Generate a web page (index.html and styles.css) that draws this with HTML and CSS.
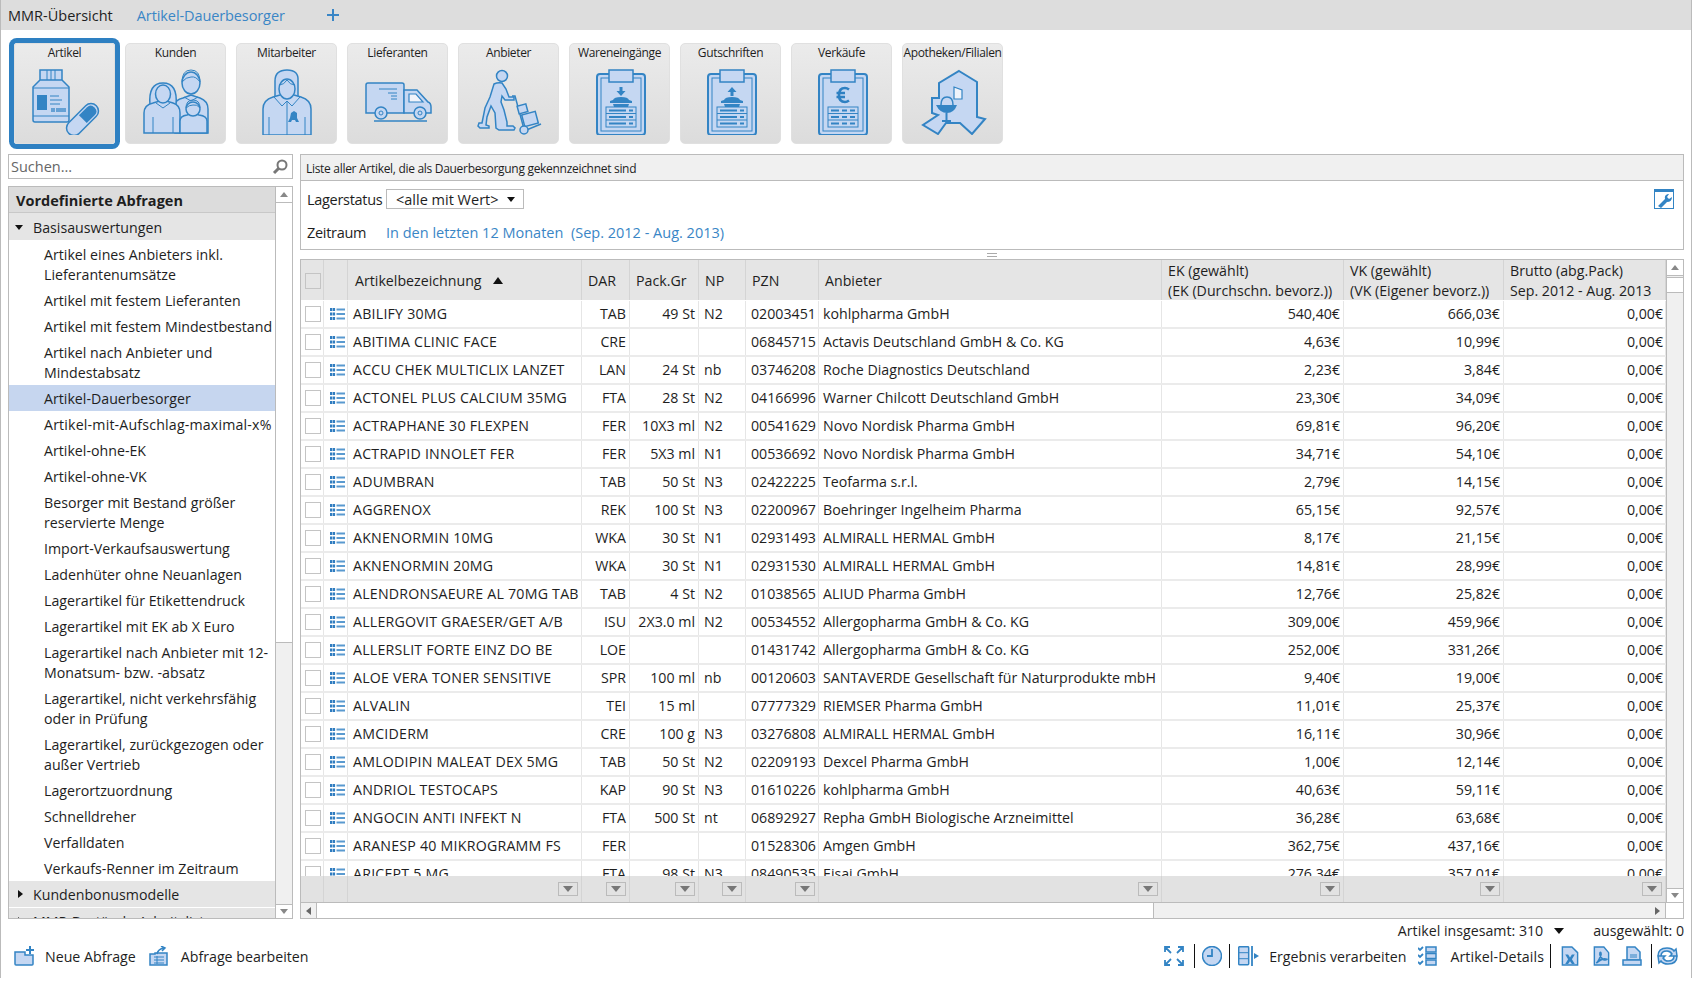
FILE: index.html
```html
<!DOCTYPE html>
<html lang="de">
<head>
<meta charset="utf-8">
<title>MMR-Übersicht</title>
<link rel="stylesheet" href="styles.css">
</head>
<body>
<svg class="defs" width="0" height="0">
  <symbol id="ls" viewBox="0 0 15 12">
    <path class="ls-d" d="M0 0h2.300v3H0zM2.800 0h2.300v3H2.800zM0 4.500h2.300v3H0zM2.800 4.500h2.300v3H2.800zM0 9h2.300v3H0zM2.800 9h2.300v3H2.800z"/>
    <path class="ls-l" d="M6.500 .5h8.500v2H6.500zM6.500 5h8.500v2H6.500zM6.500 9.500h8.500v2H6.500z"/>
  </symbol>
  <symbol id="board" viewBox="0 0 101 68">
    <rect class="ic-f ic-th" x="28" y="7" width="48" height="61" rx="3"/>
    <rect class="ic-t" x="32" y="11" width="40" height="53"/>
    <rect class="ic-f" x="40" y="3" width="24" height="12"/>
    <rect class="ic-t" x="37" y="40" width="30" height="20"/>
    <path class="ic-t" d="M37 46.500h30M37 53h30"/>
    <path class="ic-m" d="M40 43.500h17M60 43.500h4M40 50h17M60 50h4M40 56.500h17M60 56.500h4"/>
  </symbol>
  <symbol id="boardv" viewBox="0 0 101 68">
    <rect class="ic-f ic-th" x="28" y="7" width="48" height="61" rx="3"/>
    <rect class="ic-t" x="32" y="11" width="40" height="53"/>
    <rect class="ic-f" x="40" y="3" width="24" height="12"/>
    <rect class="ic-t" x="37" y="40" width="30" height="20"/>
    <path class="ic-t" d="M37 46.500h30M37 53h30"/>
    <path class="ic-m" d="M40 43.500h8M51 43.500h5M59 43.500h5M40 50h8M51 50h5M59 50h5M40 56.500h8M51 56.500h5M59 56.500h5"/>
  </symbol>
</svg>
<div class="app">
  <nav class="tabs">
    <span class="tab">MMR-Übersicht</span>
    <span class="tab tab-on">Artikel-Dauerbesorger</span>
    <svg class="plus" viewBox="0 0 12 12"><path d="M6 0v12M0 6h12"/></svg>
  </nav>

  <div class="tiles">
    <div class="tile tile-on"><span>Artikel</span>
      <svg class="art" viewBox="0 0 101 68">
        <path class="ic-f" d="M26 3h22v10h-22zM26 13h22l7 7v33q0 2-2 2H21q-2 0-2-2V20z"/>
        <path class="ic-t" d="M33 3v10M37 3v10M41 3v10M19 21h36M19 49h36"/>
        <rect class="ic-d" x="23" y="28" width="10" height="15"/>
        <path class="ic-t" d="M36 29h9M36 33h12M36 37h10"/>
        <path class="ic-b" d="M38 41v4M40 41v4M43 41v4M45 41v4M47 41v4M49 41v4M51 41v4"/>
        <g transform="rotate(-45 68.500 52.500)"><rect class="ic-f" x="49" y="45" width="39" height="15" rx="7.500"/><path class="ic-d" d="M69 47h11.500q5 0 5 5.500t-5 5.500H69z"/></g>
      </svg>
    </div>
    <div class="tile"><span>Kunden</span>
      <svg class="art" viewBox="0 0 101 68">
        <path class="ic-f" d="M50 66V38q0-5 8-7l8-3 9 3q8 3 8 11v24z"/>
        <ellipse class="ic-f" cx="66" cy="16" rx="9" ry="11"/>
        <path class="ic-t" d="M57 15q0-12 9-12t9 12q-4-6-9-5-5 0-9 5M59 30l7 4 7-4"/>
        <path class="ic-f" d="M25 38q-2-22 13-22t13 22z"/>
        <path class="ic-f" d="M19 66V46q0-8 9-10l10-3 10 3q7 2 7 10v20z"/>
        <ellipse class="ic-f" cx="38" cy="27" rx="7.500" ry="9"/>
        <path class="ic-t" d="M31 36l7 5 7-5M28 50v16M48 50v16"/>
        <path class="ic-f" d="M55 66V54q0-5 7-6l6-2 6 2q8 1 8 6v12z"/>
        <circle class="ic-f" cx="68" cy="42" r="7"/>
        <path class="ic-t" d="M61 41q0-8 7-8t7 8q-3-4-7-3-4 0-7 3"/>
      </svg>
    </div>
    <div class="tile"><span>Mitarbeiter</span>
      <svg class="art" viewBox="0 0 101 68">
        <path class="ic-f" d="M39 34V14q0-11 12-11t11 11v20z"/>
        <path class="ic-f" d="M27 68V42q0-9 10-12l14-4 14 4q10 3 10 12v26z"/>
        <ellipse class="ic-f" cx="51" cy="22" rx="8" ry="10"/>
        <path class="ic-t" d="M43 18q5 0 8-5 3 5 8 5M38 30l8 9 5-5 5 5 8-9M51 34v34M33 50v18M69 50v18"/>
        <path class="ic-d" d="M58 44l3 2v5l2 4h-3l-1-2h-3l-1 2h-3l2-4 1-5z"/>
      </svg>
    </div>
    <div class="tile"><span>Lieferanten</span>
      <svg class="art" viewBox="0 0 101 68">
        <path class="ic-f" d="M19 18q0-2 2-2h34q2 0 2 2v28H19z"/>
        <path class="ic-f" d="M57 23h13l11 12q3 1 3 5v6H57z"/>
        <path class="ic-w" d="M62 27h7l7 8H62z"/>
        <path class="ic-t" d="M32 22h18M41 26h9M44 29h6M44 32h6"/>
        <circle class="ic-f" cx="34" cy="46" r="6"/><circle class="ic-f" cx="73" cy="46" r="6"/>
        <circle class="ic-t" cx="34" cy="46" r="2"/><circle class="ic-t" cx="73" cy="46" r="2"/>
        <path class="ic-s" d="M27 54h53"/>
      </svg>
    </div>
    <div class="tile"><span>Anbieter</span>
      <svg class="art" viewBox="0 0 101 68">
        <circle class="ic-f" cx="44" cy="9" r="5.500"/>
        <path class="ic-f" d="M36 17q4-2 8-1l4 6 3 8h5v3l-9 0-3-4-1 6 3 8 3 12v4h6l2 2-1 2H41l-3-2-1-15-4-7-4 11-1 8 3 1v2H22l-2-2 1-3h3l3-15 5-11z"/>
        <path class="ic-s" d="M54 29h3l9 33"/>
        <rect class="ic-f" x="60" y="38" width="9" height="8" transform="rotate(-15 64 42)"/>
        <rect class="ic-f" x="65" y="46" width="14" height="12" transform="rotate(-15 72 52)"/>
        <path class="ic-s" d="M66 64l17-7"/>
        <circle class="ic-f" cx="66" cy="63" r="4"/>
      </svg>
    </div>
    <div class="tile"><span>Wareneingänge</span>
      <svg class="art" viewBox="0 0 101 68"><use href="#board"/>
        <path class="ic-d" d="M50.500 20h3v4h3l-4.500 5-4.500-5h3zM44 33q1-3 8-3t8 3l3 1v2H41v-2zM44 37h16l-1 3H45z"/>
      </svg>
    </div>
    <div class="tile"><span>Gutschriften</span>
      <svg class="art" viewBox="0 0 101 68"><use href="#board"/>
        <path class="ic-d" d="M50.500 29h3v-4h3l-4.500-5-4.500 5h3zM44 33q1-3 8-3t8 3l3 1v2H41v-2zM44 37h16l-1 3H45z"/>
      </svg>
    </div>
    <div class="tile"><span>Verkäufe</span>
      <svg class="art" viewBox="0 0 101 68"><use href="#boardv"/>
        <path class="ic-eu" d="M58 22.500q-2-1.500-4-1.500-6 0-6 7t6 7q2 0 4-1.500M45.500 26h8.500M45.500 30h8.500"/>
      </svg>
    </div>
    <div class="tile"><span>Apotheken/Filialen</span>
      <svg class="art" viewBox="0 0 101 68">
        <path class="ic-f ic-th" d="M57 4l18 11v35l8 2-13 15-12-11H44l-8 11-15-9 15-10-6-2V31h7V16z"/>
        <path class="ic-w" d="M52 20l8 3v9h-8z"/>
        <path class="ic-d" d="M34 38h21q-3 8-10 8t-11-8zM43.500 46h2v7h3.500v2H40v-2h3.500z"/>
        <path class="ic-s" d="M39 38q0-8 6-8t6 8"/>
      </svg>
    </div>
  </div>

  <div class="main">
    <aside class="side">
      <div class="search"><span class="search-t">Suchen...</span>
        <svg class="search-i" viewBox="0 0 16 16"><circle cx="10" cy="6" r="4.500"/><path d="M7 9l-5 5"/></svg>
      </div>
      <div class="panel">
        <div class="plist">
          <div class="phead">Vordefinierte Abfragen</div>
          <div class="pgroup pg-first"><i class="tri-d"></i>Basisauswertungen</div>
          <ul class="items">
            <li class="two">Artikel eines Anbieters inkl. Lieferantenumsätze</li>
            <li>Artikel mit festem Lieferanten</li>
            <li>Artikel mit festem Mindestbestand</li>
            <li class="two">Artikel nach Anbieter und Mindestabsatz</li>
            <li class="sel">Artikel-Dauerbesorger</li>
            <li class="hy">Artikel-mit-Aufschlag-maximal-x%</li>
            <li>Artikel-ohne-EK</li>
            <li>Artikel-ohne-VK</li>
            <li class="two">Besorger mit Bestand größer reservierte Menge</li>
            <li>Import-Verkaufsauswertung</li>
            <li>Ladenhüter ohne Neuanlagen</li>
            <li>Lagerartikel für Etikettendruck</li>
            <li>Lagerartikel mit EK ab X Euro</li>
            <li class="two">Lagerartikel nach Anbieter mit 12-Monatsum- bzw. -absatz</li>
            <li class="two">Lagerartikel, nicht verkehrsfähig oder in Prüfung</li>
            <li class="two">Lagerartikel, zurückgezogen oder außer Vertrieb</li>
            <li>Lagerortzuordnung</li>
            <li>Schnelldreher</li>
            <li>Verfalldaten</li>
            <li>Verkaufs-Renner im Zeitraum</li>
          </ul>
          <div class="pgroup"><i class="tri-r"></i>Kundenbonusmodelle</div>
          <div class="pgroup pgap"><i class="tri-r"></i>MMR-Bestände-Arbeitsliste</div>
        </div>
        <div class="vbar vbar-t">
          <div class="vbtn"><i class="arr-u"></i></div>
          <div class="vthumb vthumb-long"></div>
          <div class="vtrack"></div>
          <div class="vbtn vbtn-b"><i class="arr-d"></i></div>
        </div>
      </div>
    </aside>

    <section class="right">
      <div class="info">Liste aller Artikel, die als Dauerbesorgung gekennzeichnet sind</div>
      <div class="filter">
        <div class="frow">
          <span class="flabel">Lagerstatus</span>
          <span class="select">&lt;alle mit Wert&gt;<i class="tri-d tri-k"></i></span>
          <svg class="wrench" viewBox="0 0 20 20"><rect class="wr-b" x=".5" y=".5" width="19" height="19"/><rect class="wr-t" width="20" height="3"/><path class="wr-k" d="M4 17l7-7q-1-4 3-5l1 0-2 3 2 2 3-2q0 5-5 5l-6 6z"/></svg>
        </div>
        <div class="frow frow-2">
          <span class="flabel">Zeitraum</span>
          <span class="flink">In den letzten 12 Monaten&nbsp; (Sep. 2012 - Aug. 2013)</span>
        </div>
      </div>
      <div class="split"><i></i></div>

      <div class="tbl">
        <div class="tmid">
          <div class="tmain">
            <div class="cols thead">
              <span class="c cc"><i class="cb cb-h"></i></span><span class="c"></span>
              <span class="c hn">Artikelbezeichnung<i class="tri-u"></i></span>
              <span class="c h">DAR</span><span class="c h">Pack.Gr</span><span class="c h">NP</span><span class="c h">PZN</span><span class="c h">Anbieter</span>
              <span class="c h h2">EK (gewählt)<br>(EK (Durchschn. bevorz.))</span>
              <span class="c h h2">VK (gewählt)<br>(VK (Eigener bevorz.))</span>
              <span class="c h h2">Brutto (abg.Pack)<br>Sep. 2012 - Aug. 2013</span>
            </div>
            <div class="tbody">
              <div class="cols r"><span class="c cc"><i class="cb"></i></span><span class="c cc"><svg class="li"><use href="#ls"/></svg></span><span class="c l">ABILIFY 30MG</span><span class="c n">TAB</span><span class="c n">49 St</span><span class="c l">N2</span><span class="c p">02003451</span><span class="c l">kohlpharma GmbH</span><span class="c n">540,40€</span><span class="c n">666,03€</span><span class="c n">0,00€</span></div>
              <div class="cols r"><span class="c cc"><i class="cb"></i></span><span class="c cc"><svg class="li"><use href="#ls"/></svg></span><span class="c l">ABITIMA CLINIC FACE</span><span class="c n">CRE</span><span class="c n"></span><span class="c l"></span><span class="c p">06845715</span><span class="c l">Actavis Deutschland GmbH &amp; Co. KG</span><span class="c n">4,63€</span><span class="c n">10,99€</span><span class="c n">0,00€</span></div>
              <div class="cols r"><span class="c cc"><i class="cb"></i></span><span class="c cc"><svg class="li"><use href="#ls"/></svg></span><span class="c l">ACCU CHEK MULTICLIX LANZET</span><span class="c n">LAN</span><span class="c n">24 St</span><span class="c l">nb</span><span class="c p">03746208</span><span class="c l">Roche Diagnostics Deutschland</span><span class="c n">2,23€</span><span class="c n">3,84€</span><span class="c n">0,00€</span></div>
              <div class="cols r"><span class="c cc"><i class="cb"></i></span><span class="c cc"><svg class="li"><use href="#ls"/></svg></span><span class="c l">ACTONEL PLUS CALCIUM 35MG</span><span class="c n">FTA</span><span class="c n">28 St</span><span class="c l">N2</span><span class="c p">04166996</span><span class="c l">Warner Chilcott Deutschland GmbH</span><span class="c n">23,30€</span><span class="c n">34,09€</span><span class="c n">0,00€</span></div>
              <div class="cols r"><span class="c cc"><i class="cb"></i></span><span class="c cc"><svg class="li"><use href="#ls"/></svg></span><span class="c l">ACTRAPHANE 30 FLEXPEN</span><span class="c n">FER</span><span class="c n">10X3 ml</span><span class="c l">N2</span><span class="c p">00541629</span><span class="c l">Novo Nordisk Pharma GmbH</span><span class="c n">69,81€</span><span class="c n">96,20€</span><span class="c n">0,00€</span></div>
              <div class="cols r"><span class="c cc"><i class="cb"></i></span><span class="c cc"><svg class="li"><use href="#ls"/></svg></span><span class="c l">ACTRAPID INNOLET FER</span><span class="c n">FER</span><span class="c n">5X3 ml</span><span class="c l">N1</span><span class="c p">00536692</span><span class="c l">Novo Nordisk Pharma GmbH</span><span class="c n">34,71€</span><span class="c n">54,10€</span><span class="c n">0,00€</span></div>
              <div class="cols r"><span class="c cc"><i class="cb"></i></span><span class="c cc"><svg class="li"><use href="#ls"/></svg></span><span class="c l">ADUMBRAN</span><span class="c n">TAB</span><span class="c n">50 St</span><span class="c l">N3</span><span class="c p">02422225</span><span class="c l">Teofarma s.r.l.</span><span class="c n">2,79€</span><span class="c n">14,15€</span><span class="c n">0,00€</span></div>
              <div class="cols r"><span class="c cc"><i class="cb"></i></span><span class="c cc"><svg class="li"><use href="#ls"/></svg></span><span class="c l">AGGRENOX</span><span class="c n">REK</span><span class="c n">100 St</span><span class="c l">N3</span><span class="c p">02200967</span><span class="c l">Boehringer Ingelheim Pharma</span><span class="c n">65,15€</span><span class="c n">92,57€</span><span class="c n">0,00€</span></div>
              <div class="cols r"><span class="c cc"><i class="cb"></i></span><span class="c cc"><svg class="li"><use href="#ls"/></svg></span><span class="c l">AKNENORMIN 10MG</span><span class="c n">WKA</span><span class="c n">30 St</span><span class="c l">N1</span><span class="c p">02931493</span><span class="c l">ALMIRALL HERMAL GmbH</span><span class="c n">8,17€</span><span class="c n">21,15€</span><span class="c n">0,00€</span></div>
              <div class="cols r"><span class="c cc"><i class="cb"></i></span><span class="c cc"><svg class="li"><use href="#ls"/></svg></span><span class="c l">AKNENORMIN 20MG</span><span class="c n">WKA</span><span class="c n">30 St</span><span class="c l">N1</span><span class="c p">02931530</span><span class="c l">ALMIRALL HERMAL GmbH</span><span class="c n">14,81€</span><span class="c n">28,99€</span><span class="c n">0,00€</span></div>
              <div class="cols r"><span class="c cc"><i class="cb"></i></span><span class="c cc"><svg class="li"><use href="#ls"/></svg></span><span class="c l">ALENDRONSAEURE AL 70MG TAB</span><span class="c n">TAB</span><span class="c n">4 St</span><span class="c l">N2</span><span class="c p">01038565</span><span class="c l">ALIUD Pharma GmbH</span><span class="c n">12,76€</span><span class="c n">25,82€</span><span class="c n">0,00€</span></div>
              <div class="cols r"><span class="c cc"><i class="cb"></i></span><span class="c cc"><svg class="li"><use href="#ls"/></svg></span><span class="c l">ALLERGOVIT GRAESER/GET A/B</span><span class="c n">ISU</span><span class="c n">2X3.0 ml</span><span class="c l">N2</span><span class="c p">00534552</span><span class="c l">Allergopharma GmbH &amp; Co. KG</span><span class="c n">309,00€</span><span class="c n">459,96€</span><span class="c n">0,00€</span></div>
              <div class="cols r"><span class="c cc"><i class="cb"></i></span><span class="c cc"><svg class="li"><use href="#ls"/></svg></span><span class="c l">ALLERSLIT FORTE EINZ DO BE</span><span class="c n">LOE</span><span class="c n"></span><span class="c l"></span><span class="c p">01431742</span><span class="c l">Allergopharma GmbH &amp; Co. KG</span><span class="c n">252,00€</span><span class="c n">331,26€</span><span class="c n">0,00€</span></div>
              <div class="cols r"><span class="c cc"><i class="cb"></i></span><span class="c cc"><svg class="li"><use href="#ls"/></svg></span><span class="c l">ALOE VERA TONER SENSITIVE</span><span class="c n">SPR</span><span class="c n">100 ml</span><span class="c l">nb</span><span class="c p">00120603</span><span class="c l">SANTAVERDE Gesellschaft für Naturprodukte mbH</span><span class="c n">9,40€</span><span class="c n">19,00€</span><span class="c n">0,00€</span></div>
              <div class="cols r"><span class="c cc"><i class="cb"></i></span><span class="c cc"><svg class="li"><use href="#ls"/></svg></span><span class="c l">ALVALIN</span><span class="c n">TEI</span><span class="c n">15 ml</span><span class="c l"></span><span class="c p">07777329</span><span class="c l">RIEMSER Pharma GmbH</span><span class="c n">11,01€</span><span class="c n">25,37€</span><span class="c n">0,00€</span></div>
              <div class="cols r"><span class="c cc"><i class="cb"></i></span><span class="c cc"><svg class="li"><use href="#ls"/></svg></span><span class="c l">AMCIDERM</span><span class="c n">CRE</span><span class="c n">100 g</span><span class="c l">N3</span><span class="c p">03276808</span><span class="c l">ALMIRALL HERMAL GmbH</span><span class="c n">16,11€</span><span class="c n">30,96€</span><span class="c n">0,00€</span></div>
              <div class="cols r"><span class="c cc"><i class="cb"></i></span><span class="c cc"><svg class="li"><use href="#ls"/></svg></span><span class="c l">AMLODIPIN MALEAT DEX 5MG</span><span class="c n">TAB</span><span class="c n">50 St</span><span class="c l">N2</span><span class="c p">02209193</span><span class="c l">Dexcel Pharma GmbH</span><span class="c n">1,00€</span><span class="c n">12,14€</span><span class="c n">0,00€</span></div>
              <div class="cols r"><span class="c cc"><i class="cb"></i></span><span class="c cc"><svg class="li"><use href="#ls"/></svg></span><span class="c l">ANDRIOL TESTOCAPS</span><span class="c n">KAP</span><span class="c n">90 St</span><span class="c l">N3</span><span class="c p">01610226</span><span class="c l">kohlpharma GmbH</span><span class="c n">40,63€</span><span class="c n">59,11€</span><span class="c n">0,00€</span></div>
              <div class="cols r"><span class="c cc"><i class="cb"></i></span><span class="c cc"><svg class="li"><use href="#ls"/></svg></span><span class="c l">ANGOCIN ANTI INFEKT N</span><span class="c n">FTA</span><span class="c n">500 St</span><span class="c l">nt</span><span class="c p">06892927</span><span class="c l">Repha GmbH Biologische Arzneimittel</span><span class="c n">36,28€</span><span class="c n">63,68€</span><span class="c n">0,00€</span></div>
              <div class="cols r"><span class="c cc"><i class="cb"></i></span><span class="c cc"><svg class="li"><use href="#ls"/></svg></span><span class="c l">ARANESP 40 MIKROGRAMM FS</span><span class="c n">FER</span><span class="c n"></span><span class="c l"></span><span class="c p">01528306</span><span class="c l">Amgen GmbH</span><span class="c n">362,75€</span><span class="c n">437,16€</span><span class="c n">0,00€</span></div>
              <div class="cols r"><span class="c cc"><i class="cb"></i></span><span class="c cc"><svg class="li"><use href="#ls"/></svg></span><span class="c l">ARICEPT 5 MG</span><span class="c n">FTA</span><span class="c n">98 St</span><span class="c l">N3</span><span class="c p">08490535</span><span class="c l">Eisai GmbH</span><span class="c n">276,34€</span><span class="c n">357,01€</span><span class="c n">0,00€</span></div>
            </div>
            <div class="cols tfilt">
              <span class="c"></span><span class="c"></span>
              <span class="c f"><i class="fb"></i></span><span class="c f"><i class="fb"></i></span><span class="c f"><i class="fb"></i></span><span class="c f"><i class="fb"></i></span><span class="c f"><i class="fb"></i></span><span class="c f"><i class="fb"></i></span><span class="c f"><i class="fb"></i></span><span class="c f"><i class="fb"></i></span><span class="c f"><i class="fb"></i></span>
            </div>
          </div>
          <div class="vbar vbar-t">
            <div class="vbtn"><i class="arr-u"></i></div>
            <div class="vthumb"></div>
            <div class="vtrack"></div>
            <div class="vbtn vbtn-b"><i class="arr-d"></i></div>
          </div>
        </div>
        <div class="hbar">
          <div class="hbtn"><i class="arr-l"></i></div>
          <div class="hthumb"></div>
          <div class="htrack"></div>
          <div class="hbtn"><i class="arr-r"></i></div>
          <div class="hcorner"></div>
        </div>
      </div>
    </section>
  </div>

  <footer class="foot">
    <div class="status">
      <span>Artikel insgesamt: 310</span><i class="tri-d tri-s"></i><span class="sel-count">ausgewählt: 0</span>
    </div>
    <div class="bar">
      <svg class="bi bi-a" viewBox="0 0 20 20"><path class="ic-f" d="M1 6h10v3h8v9q0 1-1 1H2q-1 0-1-1z"/><path class="ic-d" d="M12 3h3V0h2v3h3v2h-3v3h-2V5h-3z"/></svg>
      <span class="bt bt-1">Neue Abfrage</span>
      <svg class="bi bi-b" viewBox="0 0 20 20"><path class="ic-f" d="M1 8h5v-1h12v12H1z"/><path class="ic-t" d="M5 11h10M5 14h10M5 17h10M8 10v8"/><path class="ic-s" d="M8 8q1-5 7-6M12 0l4 2-3 3"/></svg>
      <span class="bt">Abfrage bearbeiten</span>
      <span class="spacer"></span>
      <svg class="bi bi-x" viewBox="0 0 20 20"><path class="ic-e" d="M7 7L1 1M1 6V1h5M13 7l6-6M14 1h5v5M7 13l-6 6M1 14v5h5M13 13l6 6M19 14v5h-5"/></svg>
      <i class="sep sep-1"></i>
      <svg class="bi bi-c" viewBox="0 0 20 20"><circle class="ic-f" cx="10" cy="10" r="9.500"/><path class="ic-e" d="M10 3v7H5"/></svg>
      <i class="sep sep-2"></i>
      <svg class="bi bi-d" viewBox="0 0 22 20"><rect class="ic-f" x=".7" y=".7" width="10" height="18" rx="1"/><path class="ic-t" d="M1 6.700h10M1 12.700h10"/><path class="ic-e" d="M14 0v20"/><path class="ic-d" d="M16 7l5 3-5 3z"/></svg>
      <span class="bt bt-2">Ergebnis verarbeiten</span>
      <svg class="bi bi-e" viewBox="0 0 19 20"><path class="ic-e" d="M0 2l2 2 3-3M0 9l2 2 3-3M0 16l2 2 3-3"/><rect class="ic-f" x="8" y="1" width="10" height="5"/><rect class="ic-f" x="8" y="7.500" width="10" height="5"/><rect class="ic-f" x="8" y="14" width="10" height="5"/></svg>
      <span class="bt bt-3">Artikel-Details</span>
      <i class="sep sep-3"></i>
      <svg class="bi bi-f" viewBox="0 0 18 21"><path class="ic-f" d="M1 1h10l6 6v13H1z"/><path class="ic-d" d="M4 9h3l2 3 2-3h3l-3 5 3 5h-3l-2-3-2 3H4l3-5z"/></svg>
      <svg class="bi bi-g" viewBox="0 0 17 21"><path class="ic-f" d="M1 1h10l5 6v13H1z"/><path class="ic-e" d="M3 18q3-2 5-9 0-3-1-2-1 3 3 7 3 1 4 0-4-2-11 4"/></svg>
      <svg class="bi bi-h" viewBox="0 0 21 20"><path class="ic-f" d="M5 1h8l5 5v8H5z"/><path class="ic-f" d="M1 14h18v5H1z"/><path class="ic-t" d="M8 9h7M8 11h7"/></svg>
      <i class="sep sep-4"></i>
      <svg class="bi bi-i" viewBox="0 0 25 20"><path class="ic-f" d="M3 10q0-8 9-8 5 0 7 3l2-2 1 7h-7l2-2q-2-3-5-3-6 0-6 5zM22 10q0 8-9 8-5 0-7-3l-2 2-1-7h7l-2 2q2 3 5 3 6 0 6-5z"/></svg>
    </div>
  </footer>
</div>
</body>
</html>
```

FILE: styles.css
```css
* { box-sizing: border-box; }
html, body { margin: 0; height: 100%; background: #fff; }
body { font-family: "Open Sans", "Noto Sans", sans-serif; font-size: 14.200px; color: #1e1e1e; overflow: hidden; }
.defs { display: block; height: 0; }
i { display: block; font-style: normal; }
.app { height: 978px; border-left: 1px solid #bbb; border-right: 1px solid #bbb; display: flex; flex-direction: column; }

/* tabs */
.tabs { height: 30px; background: #ddd; display: flex; align-items: center; padding-left: 7px; font-size: 14.500px; }
.tab { margin-right: 24px; }
.tab-on { color: #3a86c6; margin-right: 42px; letter-spacing: -.1px; }
.plus { width: 12px; height: 12px; margin-top: -1px; }
.plus path { stroke: #3a86c6; stroke-width: 2; fill: none; }

/* tiles */
.tiles { display: flex; gap: 10px; padding: 13px 0 10px 13px; flex: none; }
.tile { width: 101px; height: 101px; flex: none; border: 1px solid #e0e0e0; border-radius: 5px; background: linear-gradient(#ebebeb, #dcdcdc); display: flex; flex-direction: column; align-items: center; font-size: 12px; white-space: nowrap; }
.tile > span { height: 23px; line-height: 18px; letter-spacing: -.35px; }
.tile-on { box-shadow: 0 0 0 5px #2e80c2; border-radius: 3px; }
.art { width: 101px; height: 68px; flex: none; margin: 0 -1px; }
.ic-f { fill: #c5d7f2; stroke: #3384c4; stroke-width: 1.500; }
.ic-th { stroke-width: 2; }
.ic-t { fill: none; stroke: #3384c4; stroke-width: 1; }
.ic-m { fill: none; stroke: #3384c4; stroke-width: 1.800; }
.ic-d { fill: #3384c4; stroke: none; }
.ic-b { fill: none; stroke: #3384c4; stroke-width: 1.300; }
.ic-s { fill: none; stroke: #3384c4; stroke-width: 1.500; }
.ic-w { fill: #f0f3fa; stroke: #3384c4; stroke-width: 1.200; }
.ic-e { fill: none; stroke: #3384c4; stroke-width: 1.800; }
.ic-eu { fill: none; stroke: #2e80c2; stroke-width: 2.600; }

/* main */
.main { flex: 1; display: flex; min-height: 0; padding-left: 7px; }
.side { width: 285px; flex: none; display: flex; flex-direction: column; }
.search { height: 25px; flex: none; border: 1px solid #bbb; display: flex; align-items: center; justify-content: space-between; padding: 0 4px 0 2px; margin-bottom: 7px; }
.search-t { color: #666; font-size: 14.500px; }
.search-i { width: 16px; height: 16px; }
.search-i circle { fill: none; stroke: #777; stroke-width: 2; }
.search-i path { fill: none; stroke: #777; stroke-width: 3; }
.panel { flex: 1; min-height: 0; display: flex; border: 1px solid #bbb; }
.plist { flex: 1; min-width: 0; overflow: hidden; }
.phead { height: 26px; background: #dcdcdc; border-bottom: 1px solid #c8c8c8; font-weight: 700; line-height: 27px; padding-left: 7px; font-size: 14.500px; }
.pgroup { height: 26px; background: #e5e5e5; display: flex; align-items: center; padding: 0 0 0 6px; }
.pg-first { height: 27px; padding-top: 1px; }
.pgap { margin-top: 1px; }
.items { list-style: none; margin: 1px 0 0; padding: 0; }
.items li { min-height: 26px; padding: 4px 1px 2px 35px; line-height: 20px; white-space: nowrap; }
.items li.two { white-space: normal; height: 46px; padding-right: 4px; }
.items li.sel { background: #c6d6ef; }
.items li.hy { letter-spacing: .17px; }
.tri-d { width: 0; height: 0; border: 4.500px solid transparent; border-top: 5px solid #111; border-bottom: 0; margin-right: 10px; }
.tri-r { width: 0; height: 0; border: 4.500px solid transparent; border-left: 5px solid #111; border-right: 0; margin-right: 10px; margin-left: 3px; }
.tri-u { width: 0; height: 0; border: 5px solid transparent; border-bottom: 7px solid #111; border-top: 0; margin-left: 11px; }

/* scrollbars */
.vbar { width: 17px; flex: none; display: flex; flex-direction: column; background: #f0f0f0; }
.vbtn { height: 16px; flex: none; background: #fff; border-bottom: 1px solid #bbb; display: flex; align-items: center; justify-content: center; }
.vbtn-b { border-bottom: 0; border-top: 1px solid #bbb; height: 14px; }
.vthumb { height: 16px; flex: none; background: #fff; border-bottom: 1px solid #bbb; margin-top: 1px; border-top: 1px solid #bbb; }
.vthumb-long { height: 440px; margin-top: 0; border-top: 0; }
.vtrack { flex: 1; }
.arr-u { width: 0; height: 0; border: 4.500px solid transparent; border-bottom: 5px solid #888; border-top: 0; }
.arr-d { width: 0; height: 0; border: 4.500px solid transparent; border-top: 5px solid #888; border-bottom: 0; }
.arr-l { width: 0; height: 0; border: 4.500px solid transparent; border-right: 5px solid #666; border-left: 0; }
.arr-r { width: 0; height: 0; border: 4.500px solid transparent; border-left: 5px solid #666; border-right: 0; }

/* right */
.right { width: 1384px; flex: none; margin-left: 7px; display: flex; flex-direction: column; }
.info { height: 27px; flex: none; background: #f0f0f0; border: 1px solid #bbb; line-height: 27px; padding-left: 5px; font-size: 12px; letter-spacing: -.3px; }
.filter { height: 69px; flex: none; border: 1px solid #bbb; border-top: 0; padding: 8px 6px 0; font-size: 14.500px; }
.frow { display: flex; align-items: center; height: 20px; }
.frow-2 { margin-top: 13px; }
.flabel { width: 79px; flex: none; letter-spacing: -.3px; }
.select { width: 138px; height: 20px; border: 1px solid #bbb; display: flex; align-items: center; justify-content: space-between; padding-left: 9px; font-size: 14.500px; }
.select .tri-k { margin-right: 8px; }
.flink { color: #3a86c6; }
.wrench { width: 20px; height: 20px; margin-left: auto; margin-right: 3px; }
.wr-b { fill: #fff; stroke: #3384c4; }
.wr-t { fill: #3384c4; }
.wr-k { fill: #3384c4; }
.split { height: 9px; flex: none; display: flex; align-items: center; justify-content: center; }
.split i { width: 10px; height: 4px; border-top: 1px solid #aaa; border-bottom: 1px solid #aaa; }

/* table */
.tbl { flex: 1; min-height: 0; border: 1px solid #bbb; display: flex; flex-direction: column; }
.tmid { flex: 1; min-height: 0; display: flex; }
.tmain { flex: 1; min-width: 0; display: flex; flex-direction: column; }
.cols { display: grid; grid-template-columns: 23px 24px 234px 48px 69px 47px 73px 343px 182px 160px 162px; }
.thead { height: 40px; background: #e5e5e5; line-height: 20px; flex: none; }
.c { border-right: 1px solid #e6e6e6; white-space: nowrap; overflow: hidden; display: block; }
.thead .c { border-right-color: #d4d4d4; padding: 1px 0 0 6px; display: flex; align-items: center; }
.thead .h { display: block; padding-top: 11px; }
.thead .h2 { padding-top: 1px; }
.thead .cc { padding-left: 4px; }
.thead .hn { padding-left: 7px; }
.tbody { flex: 1; min-height: 0; overflow: hidden; padding-top: 1px; }
.r { height: 28px; line-height: 26px; border-bottom: 2px solid #ebebeb; }
.r .cc { display: flex; align-items: center; padding-left: 4px; }
.r .cc + .cc { padding-left: 6px; }
.r .c:nth-child(3) { letter-spacing: .22px; }
.r .c:nth-child(8) { padding-left: 4px; }
.cb { width: 16px; height: 16px; border: 1px solid #c4c4c4; background: #fff; }
.cb-h { background: #e5e5e5; }
.li { width: 15px; height: 12px; }
.ls-d { fill: #2f7cc0; }
.ls-l { fill: #5a9ad0; }
.l { padding-left: 5px; }
.p { padding-left: 5px; }
.n { text-align: right; padding-right: 3px; }
.r .c:last-child { padding-right: 2px; }
.tfilt { height: 26px; background: #e2e2e2; flex: none; }
.tfilt .c { border-right-color: #d4d4d4; }
.f { display: flex; justify-content: flex-end; align-items: center; padding: 0 3px 0 0; height: 26px; }
.fb { width: 20px; height: 14px; border: 1px solid #bbb; display: flex; align-items: center; justify-content: center; }
.fb::after { content: ""; border: 5px solid transparent; border-top: 6px solid #777; border-bottom: 0; }
.vbar-t { border-left: 1px solid #bbb; }
.hbar { height: 16px; flex: none; display: flex; border-top: 1px solid #bbb; background: #f0f0f0; }
.hbtn { width: 15px; flex: none; display: flex; align-items: center; justify-content: center; background: #f0f0f0; }
.hthumb { width: 838px; flex: none; background: #fff; border-left: 1px solid #bbb; border-right: 1px solid #bbb; }
.htrack { flex: 1; }
.hcorner { width: 18px; flex: none; background: #fff; border-left: 1px solid #bbb; }

/* footer */
.foot { flex: none; height: 59px; display: flex; flex-direction: column; }
.status { height: 23px; flex: none; display: flex; align-items: center; justify-content: flex-end; padding-right: 7px; }
.status .tri-s { margin: 0 0 0 11px; border-width: 6px 5.500px 0; }
.sel-count { margin-left: 29px; }
.bar { height: 28px; flex: none; display: flex; align-items: center; padding: 0 11px 0 13px; }
.spacer { flex: 1; }
.bi { flex: none; width: 20px; height: 20px; }
.bi-a { margin-right: 11px; }
.bt-1 { margin-right: 13px; }
.bi-b { margin-right: 12px; }
.sep { width: 1px; height: 24px; background: #111; flex: none; }
.bi-x { margin-right: 10px; }
.bi-c { margin: 0 7px; }
.bi-d { margin: 0 9px 0 8px; width: 22px; }
.bt-2 { margin-right: 12px; }
.bi-e { width: 19px; margin-right: 13px; }
.bt-3 { margin-right: 6px; letter-spacing: .1px; }
.bi-f { width: 18px; margin: 0 14px 0 10px; }
.bi-g { width: 17px; margin-right: 12px; }
.bi-h { width: 21px; margin-right: 8px; }
.bi-i { width: 25px; margin-left: 3px; }
```
